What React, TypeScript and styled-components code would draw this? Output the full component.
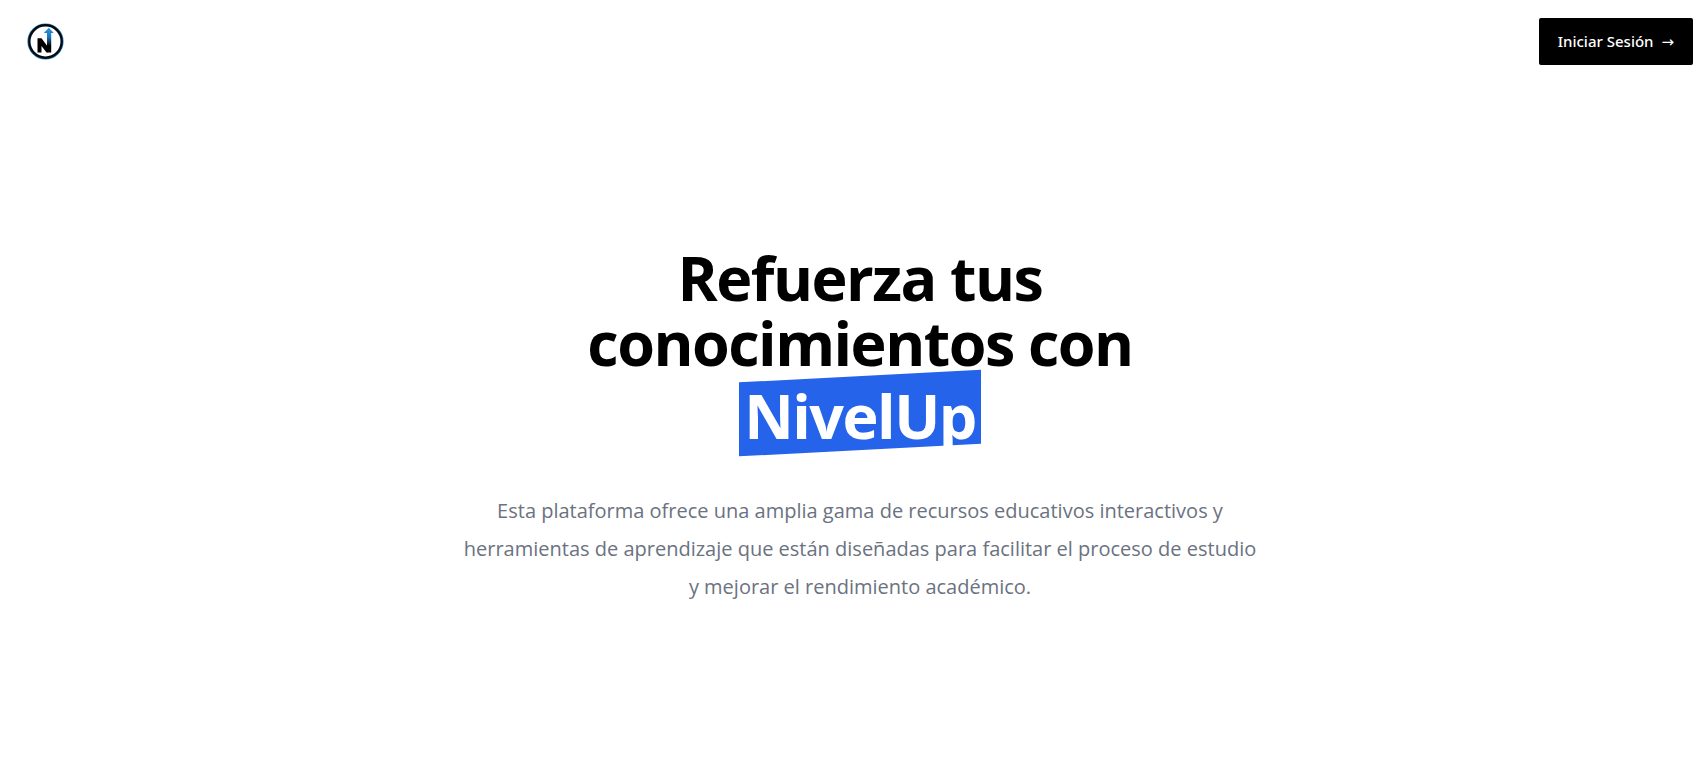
import React from "react";
import styled, { createGlobalStyle } from "styled-components";

const fontStack = `"Open Sans", "Noto Sans", sans-serif`;

const GlobalStyle = createGlobalStyle`
  *, *::before, *::after { box-sizing: border-box; }
  body {
    margin: 0;
    background: #fff;
    color: #000;
    font-family: ${fontStack};
  }
`;

const Header = styled.header`
  display: flex;
  align-items: center;
  justify-content: space-between;
  padding: 18px 7px 0 27px;
`;

const LogoLink = styled.a`
  display: flex;
  svg { display: block; width: 37px; height: 37px; }
`;

const LoginButton = styled.button`
  height: 47px;
  padding: 0 19px;
  border: 0;
  border-radius: 2px;
  background: #000;
  color: #fff;
  font: 500 15px/24px "Noto Sans", sans-serif;
  cursor: pointer;
`;

const Arrow = styled.span`
  margin-left: 4px;
  font-family: "DejaVu Sans", sans-serif;
`;

const Hero = styled.main`
  display: flex;
  flex-direction: column;
  align-items: center;
  padding: 180px 0 48px 20px;
  text-align: center;
`;

const Title = styled.h1`
  max-width: 672px;
  margin: 0;
  font-size: 61px;
  font-weight: 700;
  line-height: 65px;
  letter-spacing: -0.025em;
`;

const Highlight = styled.span`
  display: inline-block;
  position: relative;
  isolation: isolate;
  margin-top: 1px;
  padding: 7px 5px 2px;
  color: #fff;

  &::before {
    content: "";
    position: absolute;
    inset: 0;
    z-index: -1;
    background: #2563eb;
    transform: skewY(-3deg);
  }
`;

const Summary = styled.p`
  max-width: 800px;
  margin: 42px 0 0;
  color: #6b7280;
  font-size: 20px;
  line-height: 38px;
`;

const Logo = () => (
  <svg viewBox="0 0 37 37" role="img" aria-label="NivelUp">
    <defs>
      <linearGradient id="arrow" x1="0" y1="5" x2="0" y2="23" gradientUnits="userSpaceOnUse">
        <stop offset="0" stopColor="#2f93dc" />
        <stop offset="0.5" stopColor="#1c78bd" />
        <stop offset="1" stopColor="#000" />
      </linearGradient>
    </defs>
    <circle cx="18.5" cy="18.5" r="17.4" fill="#fff" stroke="#2a7fb5" strokeWidth="1.4" />
    <circle cx="18.5" cy="18.5" r="16.2" fill="none" stroke="#040b12" strokeWidth="2.4" />
    <path d="M10.5 29.5V15.2h4l6 8V29.5h-1l-5-6.6V29.5z" fill="#000" />
    <path d="M20 29.5V10h-3.2l5-5.2L26.8 10h-2.6v19.5z" fill="url(#arrow)" />
  </svg>
);

export default function App() {
  return (
    <>
      <GlobalStyle />
      <Header>
        <LogoLink href="#" aria-label="NivelUp">
          <Logo />
        </LogoLink>
        <LoginButton type="button">
          Iniciar Sesión <Arrow>→</Arrow>
        </LoginButton>
      </Header>
      <Hero>
        <Title>
          Refuerza tus
          <br />
          conocimientos con
          <br />
          <Highlight>NivelUp</Highlight>
        </Title>
        <Summary>
          Esta plataforma ofrece una amplia gama de recursos educativos interactivos y
          herramientas de aprendizaje que están diseñadas para facilitar el proceso de estudio y
          mejorar el rendimiento académico.
        </Summary>
      </Hero>
    </>
  );
}
